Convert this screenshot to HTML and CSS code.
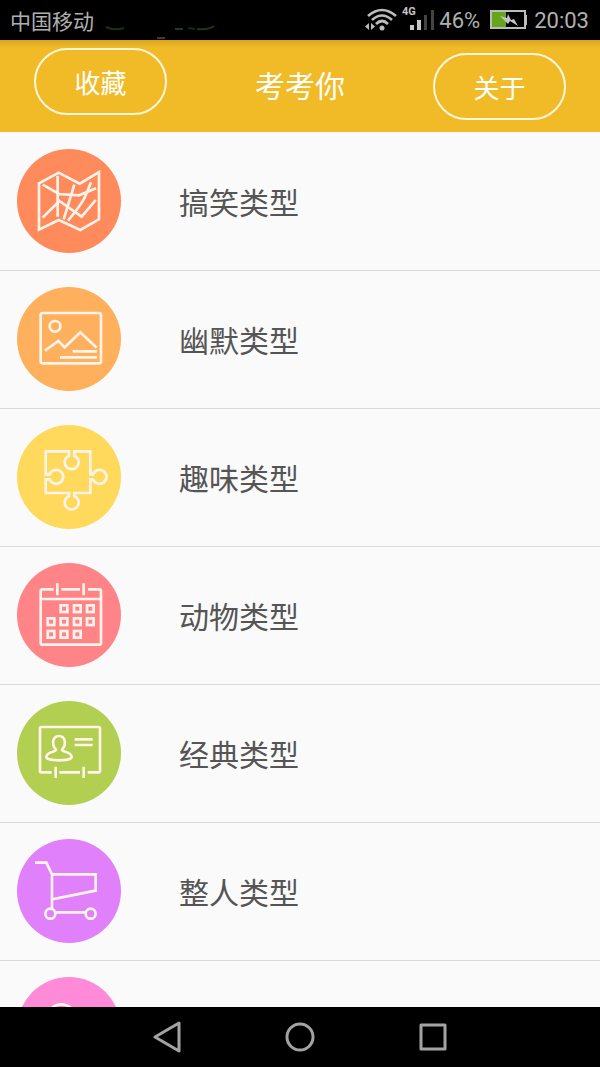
FILE: index.html
```
<!DOCTYPE html>
<html lang="zh-CN">
<head>
    <meta charset="UTF-8">
    <meta name="viewport" content="width=device-width, initial-scale=1.0">
    <title>考考你</title>
    <link rel="stylesheet" href="styles.css">
</head>
<body>
    <div class="status">
        <span class="carrier">中国移动</span>
        <svg class="marks" width="112" height="20" viewBox="0 0 112 20" fill="none" stroke-width="2">
            <path d="M2 7Q10 11 20 8" stroke="#18330f"/>
            <path d="M71 9H79" stroke="#153c45"/>
            <path d="M84 8L91 9" stroke="#142c10"/>
            <path d="M93 9Q105 10 110 6" stroke="#1c3b12"/>
            <path d="M53 18H61" stroke="#4d3c0c"/>
        </svg>
        <div class="status-right">
            <svg width="32" height="24" viewBox="0 0 32 24">
                <g fill="none" stroke="#bcbcbc" stroke-width="2.6">
                    <path d="M3 8Q17-4 31 8"/>
                    <path d="M7 12Q17 3 27 12"/>
                    <path d="M11 16Q17 10 23 16"/>
                </g>
                <circle cx="17" cy="20" r="2.5" fill="#bcbcbc"/>
                <path d="M4 15V22L0 18.500ZM6 15V22L10 18.500Z" fill="#bcbcbc"/>
            </svg>
            <svg class="signal" width="34" height="28" viewBox="0 0 34 28">
                <text x="1" y="9" class="net">4G</text>
                <rect x="9" y="19" width="4" height="5" fill="#c6c6c6"/>
                <rect x="16" y="14" width="4" height="10" fill="#c6c6c6"/>
                <rect x="23" y="9" width="3" height="15" fill="#444"/>
                <rect x="30" y="4" width="3" height="20" fill="#444"/>
            </svg>
            <span>46%</span>
            <svg class="battery" width="38" height="20" viewBox="0 0 38 20">
                <rect x="2" y="2" width="14" height="16" fill="#65a51c"/>
                <rect x="1" y="1" width="34" height="17" fill="none" stroke="#bcbcbc" stroke-width="2"/>
                <path d="M36 5V15" stroke="#bcbcbc" stroke-width="2"/>
                <path d="M10 6L17 8L18 4L21 10L24 9L28 16L20 11L18 14Z" fill="#c4c4c4"/>
            </svg>
            <span>20:03</span>
        </div>
    </div>

    <header class="header">
        <button type="button" class="pill">收藏</button>
        <h1>考考你</h1>
        <button type="button" class="pill low">关于</button>
    </header>

    <main class="content">
        <ul class="list">
            <li class="item">
                <svg class="icon orange" viewBox="21 24 312 312">
                    <path d="M87 127L146 95L209 128L267 93V235L211 267L146 237L87 266Z"/>
                    <path d="M143 104V227M98 131L147 159L207 163L258 142M98 230L148 180L215 227L257 177M193 131L161 235M243 124L231 154Q220 185 174 239"/>
                </svg>
                <span>搞笑类型</span>
            </li>
            <li class="item">
                <svg class="icon amber" viewBox="21 20 312 312">
                    <rect x="92" y="98" width="181" height="151" rx="6"/>
                    <circle cx="135" cy="138" r="16"/>
                    <path d="M105 211L145 182L164 201L211 156L260 202M188 213H261M150 231H261"/>
                </svg>
                <span>幽默类型</span>
            </li>
            <li class="item">
                <svg class="icon yellow" viewBox="21 20 312 312">
                    <path d="M177 112V99H107V168H119A21 21 0 1 1 119 183H107V224H177V233A21 21 0 1 0 193 233V224H241V183H249A21 21 0 1 0 249 168H241V99H193V112A21 21 0 1 1 177 112Z"/>
                </svg>
                <span>趣味类型</span>
            </li>
            <li class="item">
                <svg class="icon red" viewBox="21 22 312 312">
                    <path d="M131 101H98Q92 101 92 107V261Q92 267 98 267H267Q273 267 273 261V107Q273 101 267 101H234M154 101H210M92 130H273M142 83V119M221 83V119"/>
                    <g class="days">
                        <rect x="152" y="149" width="20" height="20"/>
                        <rect x="192" y="149" width="20" height="20"/>
                        <rect x="231" y="149" width="20" height="20"/>
                        <rect x="113" y="188" width="20" height="20"/>
                        <rect x="152" y="188" width="20" height="20"/>
                        <rect x="192" y="188" width="20" height="20"/>
                        <rect x="231" y="188" width="20" height="20"/>
                        <rect x="113" y="226" width="20" height="20"/>
                        <rect x="152" y="226" width="20" height="20"/>
                        <rect x="192" y="226" width="20" height="20"/>
                    </g>
                </svg>
                <span>动物类型</span>
            </li>
            <li class="item">
                <svg class="icon green" viewBox="21 24 312 312">
                    <path d="M125 238H94Q90 238 90 234V106Q90 102 94 102H266Q270 102 270 106V234Q270 238 266 238H233M148 238H210M137 221V255M221 221V255M194 139H248M194 156H248"/>
                    <path d="M138 170C124 155 127 129 147 129S170 155 156 170C154 178 185 174 185 192C185 199 166 202 147 202S109 199 109 192C109 174 140 178 138 170Z"/>
                </svg>
                <span>经典类型</span>
            </li>
            <li class="item">
                <svg class="icon purple" viewBox="21 24 312 312">
                    <path d="M75 95H109L126 130V234M126 130H257V179L126 205M137 244H227"/>
                    <circle cx="121" cy="248" r="15"/>
                    <circle cx="242" cy="248" r="15"/>
                </svg>
                <span>整人类型</span>
            </li>
            <li class="item">
                <svg class="icon pink" viewBox="21 24 312 312">
                    <circle cx="154" cy="148" r="42"/>
                </svg>
            </li>
        </ul>
    </main>

    <nav class="navbar">
        <button type="button" aria-label="返回">
            <svg width="30" height="32" viewBox="0 0 30 32"><path d="M27 2V30L3 16Z"/></svg>
        </button>
        <button type="button" aria-label="主页">
            <svg width="30" height="32" viewBox="0 0 30 32"><circle cx="15" cy="16" r="13"/></svg>
        </button>
        <button type="button" aria-label="最近任务">
            <svg width="30" height="32" viewBox="0 0 30 32"><rect x="3" y="4" width="24" height="24"/></svg>
        </button>
    </nav>
</body>
</html>
```

FILE: styles.css
```
* {
    box-sizing: border-box;
}
body {
    margin: 0;
    height: 100vh;
    display: flex;
    flex-direction: column;
    background-color: #fafafa;
    font-family: Roboto, "Noto Sans CJK SC", sans-serif;
}
button {
    padding: 0;
    border: none;
    background: none;
    font-family: inherit;
    cursor: pointer;
}
.status {
    flex: none;
    height: 40px;
    display: flex;
    align-items: center;
    padding: 0 11px 0 10px;
    background-color: #000;
    color: #b0b0b0;
    font-size: 22px;
}
.carrier {
    font-size: 21px;
}
.marks {
    align-self: flex-end;
    margin-left: 10px;
}
.status-right {
    display: flex;
    align-items: center;
    margin-left: auto;
}
.signal {
    margin: 0 4px;
}
.net {
    font-size: 11px;
    font-weight: bold;
    fill: #c6c6c6;
}
.battery {
    margin: 0 6px 0 10px;
}
.header {
    flex: none;
    height: 92px;
    display: flex;
    justify-content: space-between;
    padding: 8px 34px 12px;
    background: linear-gradient(#d9a522, #f1bb28 8px);
    color: #fff;
}
.header h1 {
    margin: 0;
    align-self: center;
    font-size: 30px;
    font-weight: 400;
}
.pill {
    width: 133px;
    height: 67px;
    align-self: flex-start;
    border: 2px solid #fff6dc;
    border-radius: 34px;
    color: #fff;
    font-size: 26px;
}
.low {
    align-self: flex-end;
}
.content {
    flex: 1;
    min-height: 0;
    overflow: hidden;
}
.list {
    margin: 0;
    padding: 1px 0 0;
    list-style: none;
}
.item {
    display: flex;
    align-items: center;
    gap: 58px;
    padding: 16px 17px 17px;
    border-bottom: 1px solid #d9d9d9;
    color: #555;
    font-size: 30px;
}
.icon {
    flex: none;
    width: 104px;
    height: 104px;
    border-radius: 50%;
    fill: none;
    stroke: #fff3ea;
    stroke-width: 8;
}
.orange { background-color: #ff8a5c; }
.amber { background-color: #ffb05c; }
.yellow { background-color: #ffd95c; }
.red { background-color: #ff8488; }
.green { background-color: #b2cf52; }
.purple { background-color: #e080fa; }
.pink { background-color: #ff8ad8; }
.navbar {
    flex: none;
    height: 60px;
    display: flex;
    justify-content: center;
    align-items: center;
    gap: 103px;
    background-color: #000;
}
.navbar svg {
    display: block;
    fill: none;
    stroke: #a3a3a3;
    stroke-width: 3;
    stroke-linejoin: round;
}
```
